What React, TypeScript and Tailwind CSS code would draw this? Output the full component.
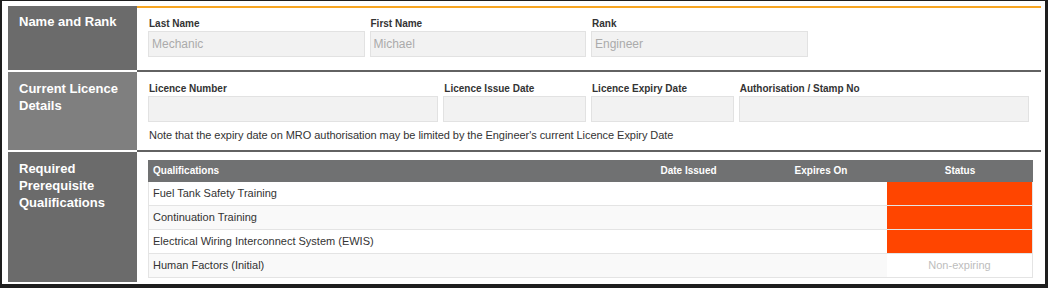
import React from "react";

const font = { fontFamily: '"Liberation Sans", Arial, Helvetica, sans-serif' };

function Field({ label, value, span }: { label: string; value?: string; span: string }) {
  return (
    <div className={span}>
      <div className="text-[10px] leading-[14px] font-bold text-[#333] pl-px">{label}</div>
      <div className="h-[26px] bg-[#f2f2f2] border border-[#e2e2e2] pl-[3px] text-[12px] leading-[24px] text-[#ababab]">
        {value}
      </div>
    </div>
  );
}

const rows = [
  { name: "Fuel Tank Safety Training", status: "red", bg: "bg-white" },
  { name: "Continuation Training", status: "red", bg: "bg-[#f9f9f9]" },
  { name: "Electrical Wiring Interconnect System (EWIS)", status: "red", bg: "bg-white" },
  { name: "Human Factors (Initial)", status: "none", bg: "bg-[#f9f9f9]" },
];

export default function App() {
  return (
    <div style={font} className="w-[1048px] h-[288px] bg-[#1e1e1e] pt-px pl-[2px] pr-[3px] pb-[4px]">
      <div className="h-full bg-white pt-[5px] pl-[6px] pr-[4px] pb-[2px] flex flex-col">
        {/* Row 1 */}
        <div className="flex h-[64px]">
          <div className="w-[129px] bg-[#6b6b6b] pl-[11px] pt-[7px] text-white font-bold text-[13px] leading-[17px]">
            Name and Rank
          </div>
          <div className="flex-1 border-t-2 border-[#f7a623] pl-[11px] pr-[12px] pt-[9px]">
            <div className="grid grid-cols-12 gap-x-[5px]">
              <Field span="col-span-3" label="Last Name" value="Mechanic" />
              <Field span="col-span-3" label="First Name" value="Michael" />
              <Field span="col-span-3" label="Rank" value="Engineer" />
            </div>
          </div>
        </div>
        {/* separator */}
        <div className="flex h-[2px]">
          <div className="w-[129px] bg-white" />
          <div className="flex-1 bg-[#626262]" />
        </div>
        {/* Row 2 */}
        <div className="flex h-[78px]">
          <div className="w-[129px] bg-[#7f7f7f] pl-[11px] pt-[8px] text-white font-bold text-[13px] leading-[17px]">
            Current Licence Details
          </div>
          <div className="flex-1 pl-[11px] pr-[12px] pt-[10px]">
            <div className="grid grid-cols-12 gap-x-[5px]">
              <Field span="col-span-4" label="Licence Number" />
              <Field span="col-span-2" label="Licence Issue Date" />
              <Field span="col-span-2" label="Licence Expiry Date" />
              <Field span="col-span-4" label="Authorisation / Stamp No" />
            </div>
            <div className="mt-[5px] text-[11px] tracking-[-0.05px] leading-[16px] text-[#333] pl-px">
              Note that the expiry date on MRO authorisation may be limited by the Engineer's current Licence Expiry Date
            </div>
          </div>
        </div>
        {/* separator */}
        <div className="flex h-[2px]">
          <div className="w-[129px] bg-white" />
          <div className="flex-1 bg-[#626262]" />
        </div>
        {/* Row 3 */}
        <div className="flex flex-1">
          <div className="w-[129px] bg-[#6b6b6b] pl-[11px] pt-[8px] text-white font-bold text-[13px] leading-[17px]">
            Required Prerequisite Qualifications
          </div>
          <div className="flex-1 pl-[11px] pr-[8px] pt-[8px]">
            <div className="border-x border-[#e4e4e4]">
              <div className="flex h-[22px] bg-[#707172] text-white font-bold text-[10px] leading-[22px] -mx-px">
                <div className="flex-1 pl-[5px]">Qualifications</div>
                <div className="w-[133px] text-center">Date Issued</div>
                <div className="w-[132px] text-center">Expires On</div>
                <div className="w-[146px] text-center">Status</div>
              </div>
              {rows.map((r) => (
                <div key={r.name} className={`flex h-[24px] border-b border-[#e4e4e4] ${r.bg} text-[11px] leading-[23px] text-[#333]`}>
                  <div className="flex-1 pl-[4px]">{r.name}</div>
                  <div className="w-[133px]" />
                  <div className="w-[132px]" />
                  {r.status === "red" ? (
                    <div className="w-[145px] bg-[#ff4500]" />
                  ) : (
                    <div className="w-[145px] bg-white text-center text-[#bdbdbd]">Non-expiring</div>
                  )}
                </div>
              ))}
            </div>
          </div>
        </div>
      </div>
    </div>
  );
}
